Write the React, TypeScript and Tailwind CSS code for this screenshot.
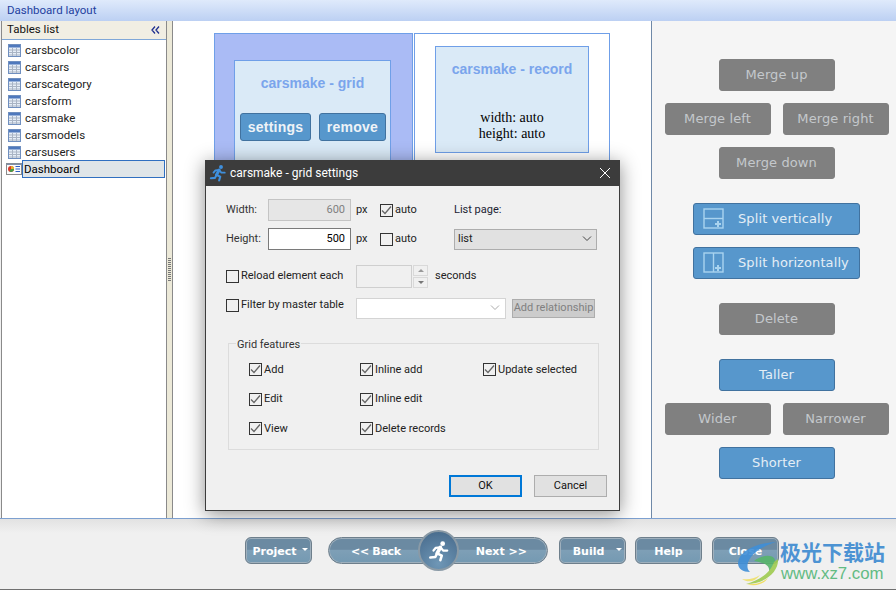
const TABLES = ["carsbcolor", "carscars", "carscategory", "carsform", "carsmake", "carsmodels", "carsusers"];

function TableIcon() {
  return (
    <svg width="13" height="13" viewBox="0 0 13 13" className="shrink-0">
      <rect x="0.5" y="0.5" width="12" height="12" fill="#e6eef8" stroke="#6f8fc0" />
      <rect x="1" y="1" width="11" height="2.5" fill="#4f79bd" />
      <path d="M1 6h11M1 8.5h11M1 11h11M4.5 4v8M8.5 4v8" stroke="#a9b4c4" strokeWidth="1" fill="none" />
    </svg>
  );
}

function DashboardIcon() {
  return (
    <svg width="16" height="12" viewBox="0 0 16 12" className="shrink-0">
      <rect x="0.5" y="0.5" width="15" height="11" fill="#fbfbfb" stroke="#8a8a8a" />
      <rect x="0.5" y="0.5" width="15" height="1.5" fill="#7f8fa8" />
      <circle cx="5" cy="6" r="3" fill="#d8382c" />
      <path d="M5 6V3a3 3 0 0 1 3 3z" fill="#e8b52c" />
      <path d="M5 6h3a3 3 0 0 1-4.5 2.6z" fill="#3aa34a" />
      <path d="M9.5 3.5h4.5M9.5 6h4.5M9.5 8.5h4.5" stroke="#2f5fc4" strokeWidth="1.2" />
    </svg>
  );
}

function Runner({ color, size }: { color: string; size: number }) {
  return (
    <svg width={size} height={size} viewBox="0 0 24 24" fill="none" stroke={color} strokeWidth="3" strokeLinecap="round" strokeLinejoin="round">
      <circle cx="16" cy="4" r="2.6" fill={color} stroke="none" />
      <path d="M13.5 8 10 14.5" strokeWidth="4" />
      <path d="M13.5 8 8.5 8.5 6 11.5" strokeWidth="2.4" />
      <path d="M13.5 8 16.5 11.5 21 11.5" strokeWidth="2.4" />
      <path d="M10 14.5 15 17 13.5 22" strokeWidth="2.8" />
      <path d="M10 14.5 8 18.5 2.5 19" strokeWidth="2.8" />
    </svg>
  );
}

function PanelButton({ label, blue, wide, narrow, icon }: { label: string; blue?: boolean; wide?: boolean; narrow?: boolean; icon?: "v" | "h" }) {
  const width = wide ? "w-[167px]" : narrow ? "w-[106px]" : "w-[116px]";
  const color = blue ? "bg-[#5797cc] border-[#41729f] text-[#e4eef6]" : "bg-[#808080] border-[#808080] text-[#c4c8cc]";
  return (
    <div className={`${width} ${color} h-[32px] border rounded-[3px] flex items-center relative text-[13px] tracking-[0.1px] font-['DejaVu_Sans',sans-serif] ${icon ? "justify-start pl-[44px]" : "justify-center"}`}>
      {icon && (
        <svg width="22" height="22" viewBox="0 0 22 22" fill="none" stroke="#a9d3ef" strokeWidth="1.4" className="absolute left-[9px] top-[4px]">
          <rect x="1" y="1" width="19" height="19" />
          {icon === "v" ? <path d="M1 10.5h19" /> : <path d="M10.5 1v19" />}
          <path d="M15 13v6M12 16h6" strokeWidth="2" />
        </svg>
      )}
      <span className="whitespace-nowrap">{label}</span>
    </div>
  );
}

function Check({ checked, label, className }: { checked?: boolean; label?: string; className?: string }) {
  return (
    <label className={`flex items-center gap-[2px] whitespace-nowrap ${className ?? ""}`}>
      <span className="w-[13px] h-[13px] border border-[#333] bg-[#f0f0f0] flex items-center justify-center shrink-0">
        {checked && (
          <svg width="11" height="11" viewBox="0 0 11 11" fill="none" stroke="#666" strokeWidth="1.3">
            <path d="M1 5.5 4 8.5 10 1.5" />
          </svg>
        )}
      </span>
      {label && <span>{label}</span>}
    </label>
  );
}

function NavButton({ label, caret, className }: { label: string; caret?: boolean; className?: string }) {
  return (
    <div className={`h-[27px] w-[67px] relative rounded-[6px] border border-[#6e7f8c] shadow-[inset_0_0_0_1px_#9fb0bd] bg-[linear-gradient(#6b8aa2_0%,#6b8aa2_45%,#7e9fb6_50%,#7499b2_100%)] flex items-center justify-center pt-[3px] text-[11px] font-bold text-white font-['DejaVu_Sans',sans-serif] ${className ?? ""}`}>
      <span className={caret ? "mr-[8px]" : ""}>{label}</span>
      {caret && <span className="absolute right-[3px] top-[10px] border-x-[3px] border-x-transparent border-t-[3px] border-t-white" />}
    </div>
  );
}

function Chevron({ color }: { color: string }) {
  return (
    <svg width="10" height="6" viewBox="0 0 10 6" fill="none" stroke={color} strokeWidth="1">
      <path d="M1 .5 5 4.5 9 .5" />
    </svg>
  );
}

function SettingsDialog() {
  return (
    <div className="absolute left-[205px] top-[160px] w-[415px] h-[351px] border border-[#3c3c3c] border-t-0 bg-[#f0f0f0] shadow-[0_3px_18px_rgba(0,0,0,0.45)] text-[11px] text-[#222] font-['Roboto',sans-serif] flex flex-col">
      <div className="h-[26px] -mx-px bg-[#3c3c3c] flex items-center pl-[4px] pr-[9px] shrink-0 text-white text-[12px]">
        <Runner color="#3f8fdc" size={18} />
        <span className="ml-[3px]">carsmake - grid settings</span>
        <svg width="12" height="12" viewBox="0 0 12 12" stroke="#fff" strokeWidth="1" className="ml-auto">
          <path d="M1 1 11 11M11 1 1 11" />
        </svg>
      </div>
      <div className="flex flex-col pl-[20px] pr-[12px]">
        <div className="flex items-center h-[22px] mt-[13px]">
          <span className="w-[42px] text-[#333]">Width:</span>
          <div className="w-[83px] h-[22px] border border-[#c4c4c4] bg-[#e6e6e6] text-[#808080] flex items-center justify-end pr-[5px]">600</div>
          <span className="ml-[5px] w-[24px]">px</span>
          <Check checked label="auto" className="w-[50px]" />
          <span className="ml-[24px] text-[#223]">List page:</span>
        </div>
        <div className="flex items-center h-[22px] mt-[7px]">
          <span className="w-[42px] text-[#333]">Height:</span>
          <div className="w-[83px] h-[22px] border border-[#7a7a7a] bg-white text-black flex items-center justify-end pr-[5px]">500</div>
          <span className="ml-[5px] w-[24px]">px</span>
          <Check label="auto" className="w-[50px]" />
          <div className="ml-[24px] w-[143px] h-[21px] border border-[#adadad] bg-[#e1e1e1] flex items-center justify-between pl-[3px] pr-[4px]">
            <span>list</span>
            <Chevron color="#444" />
          </div>
        </div>
        <div className="flex items-center h-[24px] mt-[14px]">
          <Check label="Reload element each" className="w-[130px]" />
          <div className="w-[56px] h-[23px] border border-[#cfcfcf] bg-[#f0f0f0]" />
          <div className="ml-[1px] w-[15px] h-[23px] flex flex-col gap-[1px]">
            <div className="flex-1 border border-[#d9d9d9] flex items-center justify-center">
              <span className="border-x-[3px] border-x-transparent border-b-[3px] border-b-[#999]" />
            </div>
            <div className="flex-1 border border-[#d9d9d9] flex items-center justify-center">
              <span className="border-x-[3px] border-x-transparent border-t-[3px] border-t-[#777]" />
            </div>
          </div>
          <span className="ml-[7px]">seconds</span>
        </div>
        <div className="flex items-center h-[22px] mt-[9px]">
          <Check label="Filter by master table" className="w-[130px] -mt-[5px]" />
          <div className="w-[150px] h-[21px] border border-[#d4d4d4] bg-white flex items-center justify-end pr-[5px]">
            <Chevron color="#aaa" />
          </div>
          <div className="ml-[6px] w-[83px] h-[19px] border border-[#adadad] bg-[#cccccc] text-[#808080] flex items-center justify-center whitespace-nowrap">Add relationship</div>
        </div>
        <fieldset className="ml-[2px] mr-[8px] mt-[18px] h-[113px] border border-[#dcdcdc]">
          <legend className="ml-[7px] px-[1px] text-[#333] leading-[13px] relative top-[1px]">Grid features</legend>
          <div className="grid grid-cols-[111px_123px_1fr] grid-rows-[29.5px_29.5px_29.5px] mt-[5px] pl-[20px] items-center">
            <Check checked label="Add" />
            <Check checked label="Inline add" />
            <Check checked label="Update selected" />
            <Check checked label="Edit" />
            <Check checked label="Inline edit" />
            <span />
            <Check checked label="View" />
            <Check checked label="Delete records" />
          </div>
        </fieldset>
        <div className="flex justify-end gap-[12px] mt-[25px]">
          <div className="w-[73px] h-[22px] border-2 border-[#0078d7] bg-[#e1e1e1] flex items-center justify-center text-[#111]">OK</div>
          <div className="w-[73px] h-[22px] border border-[#adadad] bg-[#e1e1e1] flex items-center justify-center text-[#111]">Cancel</div>
        </div>
      </div>
    </div>
  );
}

function Watermark() {
  return (
    <div className="absolute left-[736px] top-[538px] flex items-start pointer-events-none">
      <svg width="44" height="46" viewBox="0 0 44 46" fill="none" className="mt-[3px] opacity-90">
        <path d="M40 1C20 2 3 10 2 22c0 6 5 9 12 9C7 25 14 9 40 1z" fill="#3f8fd8" />
        <path d="M18 20c6-5 16-7 20-3 3 4-1 10-5 14 1-5-2-9-15-11z" fill="#57b56a" />
        <path d="M42 18c1 12-12 25-32 25 12-3 24-10 28-22z" fill="#9ecb50" />
        <path d="M10 43c8 1 16-1 22-6-4 6-12 9-22 6z" fill="#f0dc50" />
        <path d="M6 38c6 1 12 0 18-4-5 7-12 8-18 4z" fill="#efe06a" />
      </svg>
      <div className="flex flex-col">
        <span className="text-[21px] leading-[27px] font-bold text-[#4d93d3] font-['Noto_Sans_CJK_SC',sans-serif] whitespace-nowrap">极光下载站</span>
        <span className="text-[16.8px] leading-[17px] text-[#62bb83] ml-[1px] font-['Liberation_Sans',sans-serif]">www.xz7.com</span>
      </div>
    </div>
  );
}

export default function App() {
  return (
    <div className="relative w-[896px] h-[590px] overflow-hidden flex flex-col bg-[#f0f0f0] font-['Roboto',sans-serif]">
      <div className="h-[21px] shrink-0 bg-[linear-gradient(#dfeafb,#bcd0f3)] flex items-center pl-[7px] text-[11.5px] text-[#1f3f9f]">Dashboard layout</div>

      <div className="flex flex-1 min-h-0 border-b border-[#7da0d0]">
        {/* left tables list */}
        <div className="w-[166px] shrink-0 ml-[1px] border-x border-[#8a8a8a] bg-white flex flex-col">
          <div className="h-[19px] bg-[#f1eee3] border-b border-[#7fa7d8] flex items-center justify-between pl-[5px] pr-[6px] text-[11.5px] text-[#111]">
            <span>Tables list</span>
            <svg width="9" height="8" viewBox="0 0 9 8" fill="none" stroke="#1f2f8f" strokeWidth="1.3">
              <path d="M4 .5 1 4l3 3.5M8 .5 5 4l3 3.5" />
            </svg>
          </div>
          <div className="flex flex-col text-[11.5px] text-[#222]">
            {TABLES.map((t) => (
              <div key={t} className="h-[17px] flex items-center pl-[6px] gap-[4px] first:mt-[2px]">
                <TableIcon />
                <span>{t}</span>
              </div>
            ))}
            <div className="h-[18px] -mt-[1px] flex items-center pl-[4px]">
              <DashboardIcon />
              <span className="flex-1 h-[18px] border border-[#2f6fc0] bg-[#dfe5e8] flex items-center pl-[1px] pt-[1px] mr-[1px] text-black">Dashboard</span>
            </div>
          </div>
        </div>

        {/* splitter */}
        <div className="w-[6px] shrink-0 bg-[#ece9d8] border-r border-[#8a8a8a] flex items-center justify-center">
          <div className="w-[3px] h-[24px] bg-[repeating-linear-gradient(#777_0,#777_1px,#ece9d8_1px,#ece9d8_2px)]" />
        </div>

        {/* center canvas */}
        <div className="w-[478px] shrink-0 bg-white pl-[41px] pt-[12px] flex gap-[1px] items-start">
          <div className="w-[199px] h-[300px] bg-[#aabbf5] border border-[#6f9fe8] pl-[19px] pt-[26px]">
            <div className="w-[157px] h-[200px] bg-[#daeaf7] border border-[#6f9fe8] flex flex-col">
              <div className="text-center font-bold text-[14px] text-[#7aa5ec] font-['Liberation_Sans',sans-serif] mt-[12px]">carsmake - grid</div>
              <div className="flex justify-between pl-[5px] pr-[4px] mt-[19px]">
                <div className="w-[71px] h-[28px] rounded-[3px] bg-[#5797cc] border border-[#41729f] text-[#eef3f7] font-bold text-[14px] tracking-[0.25px] flex items-center justify-center font-['Liberation_Sans',sans-serif]">settings</div>
                <div className="w-[67px] h-[28px] rounded-[3px] bg-[#5797cc] border border-[#41729f] text-[#eef3f7] font-bold text-[14px] tracking-[0.25px] flex items-center justify-center font-['Liberation_Sans',sans-serif]">remove</div>
              </div>
            </div>
          </div>
          <div className="w-[196px] h-[300px] bg-white border border-[#6f9fe8] pl-[20px] pt-[12px]">
            <div className="w-[154px] h-[107px] bg-[#daeaf7] border border-[#6f9fe8] flex flex-col items-center">
              <div className="font-bold text-[14px] text-[#7aa5ec] font-['Liberation_Sans',sans-serif] mt-[12px]">carsmake - record</div>
              <div className="mt-[30px] text-[14px] leading-[16px] text-black text-center font-['Liberation_Serif',serif]">
                width: auto
                <br />
                height: auto
              </div>
            </div>
          </div>
        </div>

        {/* right tools */}
        <div className="flex-1 border-l border-[#6f89a8] bg-[#f5f5f5] flex flex-col items-center pt-[38px] pl-[5px] gap-[12px]">
          <PanelButton label="Merge up" />
          <div className="flex gap-[12px]">
            <PanelButton label="Merge left" narrow />
            <PanelButton label="Merge right" narrow />
          </div>
          <PanelButton label="Merge down" />
          <div className="mt-[12px]">
            <PanelButton label="Split vertically" wide blue icon="v" />
          </div>
          <PanelButton label="Split horizontally" wide blue icon="h" />
          <div className="mt-[12px]">
            <PanelButton label="Delete" />
          </div>
          <div className="mt-[12px]">
            <PanelButton label="Taller" blue />
          </div>
          <div className="flex gap-[12px]">
            <PanelButton label="Wider" narrow />
            <PanelButton label="Narrower" narrow />
          </div>
          <PanelButton label="Shorter" blue />
        </div>
      </div>

      {/* bottom wizard bar */}
      <div className="h-[71px] shrink-0 border-b border-[#707070] bg-[linear-gradient(#e2e2e2,#f0f0f0_14px)] flex items-start pl-[245px] pt-[18px]">
        <NavButton label="Project" caret />
        <div className="relative ml-[16px] w-[220px] h-[27px] rounded-full border border-[#6e7f8c] shadow-[inset_0_0_0_1px_#9fb0bd] bg-[linear-gradient(#6b8aa2_0%,#6b8aa2_45%,#7e9fb6_50%,#7499b2_100%)] flex items-center pt-[3px] text-[11px] font-bold text-white font-['DejaVu_Sans',sans-serif]">
          <span className="ml-[22px] tracking-[-0.3px]">&lt;&lt; Back</span>
          <span className="ml-auto mr-[20px]">Next &gt;&gt;</span>
          <div className="absolute left-[89px] top-[-8px] w-[41px] h-[41px] rounded-full border-2 border-[#8a9aa6] bg-[radial-gradient(circle_at_50%_85%,#6f97b6,#45688a)] flex items-center justify-center">
            <Runner color="#ffffff" size={22} />
          </div>
        </div>
        <NavButton label="Build" caret className="ml-[11px]" />
        <NavButton label="Help" className="ml-[9px]" />
        <NavButton label="Close" className="ml-[10px]" />
      </div>

      <SettingsDialog />
      <Watermark />
    </div>
  );
}
